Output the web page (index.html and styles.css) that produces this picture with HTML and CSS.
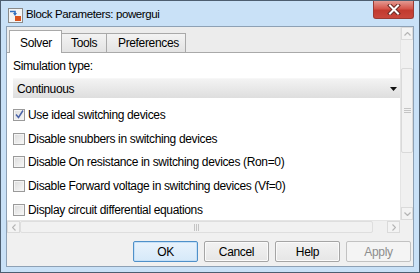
FILE: index.html
```html
<!DOCTYPE html>
<html>
<head>
<meta charset="utf-8">
<link rel="stylesheet" href="styles.css">
</head>
<body>
<div class="window">
  <div class="titlebar">
    <svg class="appicon" width="15" height="15" viewBox="0 0 15 15">
      <rect x="0.5" y="0.5" width="14" height="14" fill="#f4f4f4" stroke="#8a8a8a"/>
      <path d="M2 3.5 H7 V6" fill="none" stroke="#2f6fbf" stroke-width="1.6"/>
      <path d="M5 5 L7 8 L9 5 Z" fill="#2f6fbf"/>
      <rect x="7" y="8" width="6" height="5" fill="#d9531e"/>
    </svg>
    <span class="title">Block Parameters: powergui</span>
    <div class="close">
      <svg width="14" height="11" viewBox="0 0 14 11">
        <path d="M3 1.5 L11 9.5 M11 1.5 L3 9.5" stroke="#6b2a25" stroke-width="4" stroke-linecap="square"/>
        <path d="M3 1.5 L11 9.5 M11 1.5 L3 9.5" stroke="#ffffff" stroke-width="2" stroke-linecap="square"/>
      </svg>
    </div>
  </div>
  <div class="client">
    <div class="scrollpane">
      <div class="viewport">
        <div class="tabs">
          <div class="tab active">Solver</div>
          <div class="tab">Tools</div>
          <div class="tab">Preferences</div>
        </div>
        <div class="panel">
          <div class="label">Simulation type:</div>
          <div class="select">
            <span>Continuous</span>
            <svg width="7" height="4" viewBox="0 0 7 4"><path d="M0 0 H7 L3.5 4 Z" fill="#111"/></svg>
          </div>
          <div class="check"><span class="box checked"><svg width="9" height="9" viewBox="0 0 9 9"><path d="M1 4.5 L3.5 7.5 L8 0.5" fill="none" stroke="#4a63a8" stroke-width="1.5"/></svg></span><span>Use ideal switching devices</span></div>
          <div class="check"><span class="box"></span><span>Disable snubbers in switching devices</span></div>
          <div class="check"><span class="box"></span><span>Disable On resistance in switching devices (Ron=0)</span></div>
          <div class="check"><span class="box"></span><span>Disable Forward voltage in switching devices (Vf=0)</span></div>
          <div class="check"><span class="box"></span><span>Display circuit differential equations</span></div>
        </div>
      </div>
      <div class="vscroll">
        <div class="sbtn"><svg width="7" height="4" viewBox="0 0 7 4"><path d="M0.5 3.5 L3.5 0.5 L6.5 3.5" fill="none" stroke="#b5b5b5" stroke-width="1.2"/></svg></div>
        <div class="vtrack">
          <div class="vthumb"><svg width="7" height="5" viewBox="0 0 7 5"><path d="M0 0.5 H7 M0 2.5 H7 M0 4.5 H7" stroke="#c4c4c4"/></svg></div>
        </div>
        <div class="sbtn"><svg width="7" height="4" viewBox="0 0 7 4"><path d="M0.5 0.5 L3.5 3.5 L6.5 0.5" fill="none" stroke="#b5b5b5" stroke-width="1.2"/></svg></div>
      </div>
      <div class="hscroll">
        <div class="sbtn"><svg width="4" height="7" viewBox="0 0 4 7"><path d="M3.5 0.5 L0.5 3.5 L3.5 6.5" fill="none" stroke="#b5b5b5" stroke-width="1.2"/></svg></div>
        <div class="htrack">
          <div class="hthumb"><svg width="5" height="7" viewBox="0 0 5 7"><path d="M0.5 0 V7 M2.5 0 V7 M4.5 0 V7" stroke="#c4c4c4"/></svg></div>
        </div>
        <div class="sbtn"><svg width="4" height="7" viewBox="0 0 4 7"><path d="M0.5 0.5 L3.5 3.5 L0.5 6.5" fill="none" stroke="#b5b5b5" stroke-width="1.2"/></svg></div>
      </div>
      <div class="corner"></div>
    </div>
    <div class="buttons">
      <button class="btn default">OK</button>
      <button class="btn">Cancel</button>
      <button class="btn">Help</button>
      <button class="btn disabled">Apply</button>
    </div>
  </div>
</div>
</body>
</html>
```
FILE: styles.css
```css
* { box-sizing: border-box; }
html, body { margin: 0; padding: 0; }
body {
  width: 420px;
  height: 273px;
  overflow: hidden;
  font-family: "Liberation Sans", Arial, sans-serif;
  font-size: 12px;
  letter-spacing: -0.35px;
  color: #000;
}
.window {
  width: 420px;
  height: 273px;
  border: 1px solid #4d5e70;
  background: #c9e1f7;
  padding: 0 5px 5px 5px;
  display: flex;
  flex-direction: column;
}
.titlebar {
  height: 25px;
  display: flex;
  align-items: flex-start;
}
.appicon {
  margin: 7px 0 0 2px;
  flex: none;
}
.title {
  margin: 6px 0 0 3px;
  font-size: 11.5px;
  letter-spacing: -0.4px;
  line-height: 14px;
  color: #000;
}
.close {
  margin-left: auto;
  margin-right: 0;
  width: 41px;
  height: 18px;
  border: 1px solid #9a3a33;
  border-top: none;
  border-radius: 0 0 3px 3px;
  background: linear-gradient(#e39a92 0%, #d5564b 45%, #c23a2f 55%, #c9473c 100%);
  display: flex;
  align-items: center;
  justify-content: center;
}
.client {
  flex: 1;
  border: 1px solid #8ea1b5;
  background: #f0f0f0;
  display: flex;
  flex-direction: column;
  min-height: 0;
}
.scrollpane {
  height: 206px;
  display: grid;
  grid-template-columns: 1fr 13px;
  grid-template-rows: 1fr 13px;
}
.viewport {
  display: flex;
  flex-direction: column;
  overflow: hidden;
  min-height: 0;
}
.tabs {
  height: 26px;
  flex: none;
  background: #ececec;
  border-bottom: 1px solid #a9a9a9;
  display: flex;
  align-items: flex-end;
  padding-left: 2px;
}
.tab {
  height: 19px;
  border: 1px solid #a9a9a9;
  border-bottom: none;
  border-left: none;
  background: linear-gradient(#f3f3f3, #e3e3e3);
  padding: 0 10px;
  line-height: 18px;
  margin-bottom: 0;
}
.tab:nth-child(2) { width: 45px; padding: 0 0 0 9px; }
.tab:nth-child(3) { width: 79px; padding: 0 0 0 11px; }
.tab.active {
  width: 53px;
  height: 23px;
  border-left: 1px solid #a9a9a9;
  background: #ffffff;
  margin-bottom: -1px;
  line-height: 24px;
  padding: 0 0 0 10px;
}
.panel {
  flex: 1;
  background: #ffffff;
  padding: 5px 0 0 6px;
  overflow: hidden;
  min-height: 0;
}
.label {
  height: 16px;
  line-height: 16px;
}
.select {
  margin-top: 4px;
  height: 20px;
  background: linear-gradient(#f3f3f3, #dedede);
  border-top: 1px solid #f7f7f7;
  display: flex;
  align-items: center;
  justify-content: space-between;
  padding: 0 3px 0 4px;
}
.select svg { margin-top: 1px; }
.select + .check { margin-top: 5px; }
.check {
  height: 23.7px;
  display: flex;
  align-items: center;
  white-space: nowrap;
}
.box {
  width: 12px;
  height: 12px;
  border: 1px solid #9a9a9a;
  background: linear-gradient(135deg, #dcdcdc, #f8f8f8);
  box-shadow: inset 0 0 0 1px #f4f4f4;
  margin-right: 3px;
  flex: none;
  display: flex;
  align-items: center;
  justify-content: center;
}
.vscroll {
  grid-column: 2;
  grid-row: 1;
  display: flex;
  flex-direction: column;
  background: #f0f0f0;
  border-left: 1px solid #e4e4e4;
}
.sbtn {
  flex: none;
  width: 13px;
  height: 13px;
  border: 1px solid #dadada;
  background: #f3f3f3;
  display: flex;
  align-items: center;
  justify-content: center;
}
.vscroll .sbtn { width: 100%; }
.vtrack {
  flex: 1;
  padding-top: 28px;
  padding-bottom: 54px;
  display: flex;
}
.vthumb {
  flex: 1;
  border: 1px solid #d9d9d9;
  border-radius: 2px;
  background: #f2f2f2;
  display: flex;
  align-items: center;
  justify-content: center;
}
.hscroll {
  grid-column: 1;
  grid-row: 2;
  display: flex;
  background: #f0f0f0;
  border-top: 1px solid #e4e4e4;
}
.hscroll .sbtn { height: 100%; }
.htrack {
  flex: 1;
  padding-right: 14px;
  display: flex;
}
.hthumb {
  flex: 1;
  border: 1px solid #dedede;
  border-radius: 2px;
  background: #f1f1f1;
  display: flex;
  align-items: center;
  justify-content: center;
}
.corner {
  grid-column: 2;
  grid-row: 2;
  background: #f0f0f0;
}
.buttons {
  flex: 1;
  display: flex;
  justify-content: flex-end;
  align-items: flex-start;
  gap: 6px;
  padding: 8px 2px 0 0;
}
.btn {
  width: 65px;
  height: 21px;
  font-family: "Liberation Sans", Arial, sans-serif;
  font-size: 12px;
  letter-spacing: -0.35px;
  color: #000;
  border: 1px solid #a5a5a5;
  border-radius: 2px;
  background: linear-gradient(#f2f2f2 0%, #e6e6e6 100%);
  box-shadow: inset 0 0 0 1px #fafafa;
  padding: 0;
}
.btn.default {
  border-color: #4f90c9;
  background: linear-gradient(#e9f3fc 0%, #d6e9f9 100%);
  box-shadow: inset 0 0 0 1px #c5e0f7;
}
.btn.disabled {
  color: #8d8d8d;
  border-color: #c2c2c2;
  background: #f4f4f4;
  box-shadow: none;
}
```
